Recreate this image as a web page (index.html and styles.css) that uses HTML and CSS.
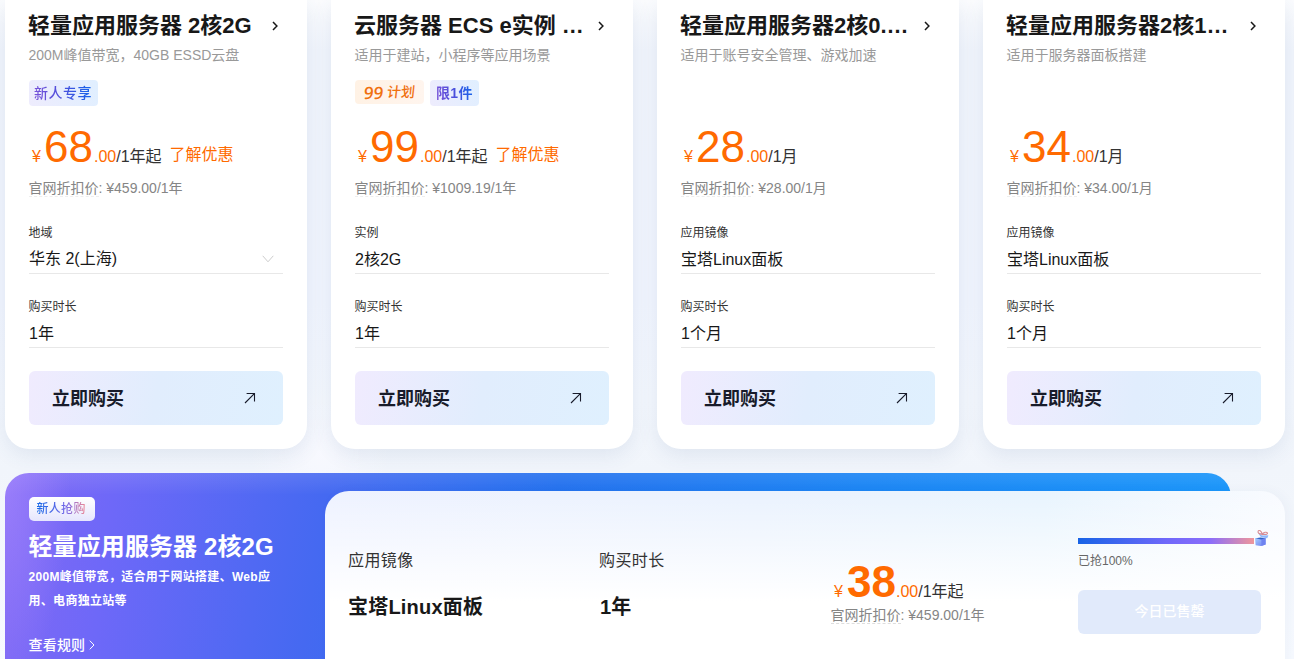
FILE: index.html
```html
<!DOCTYPE html>
<html lang="zh-CN">
<head>
<meta charset="utf-8">
<title>云服务器优惠</title>
<link rel="stylesheet" href="styles.css">
</head>
<body>
<svg class="sprite" width="0" height="0">
  <symbol id="chevron" viewBox="0 0 8 10"><path d="M2 1 5.9 5 2 9" fill="none" stroke="currentColor" stroke-width="1.5"/></symbol>
  <symbol id="arrow" viewBox="0 0 12 12"><path d="M1 11 10.6 1.4M2.6 1.5H10.5V9.4" fill="none" stroke="currentColor" stroke-width="1.1"/></symbol>
</svg>
<main class="page">
  <section class="cards">
    <article class="card">
      <h2 class="title"><span>轻量应用服务器 2核2G</span><svg class="chev"><use href="#chevron"/></svg></h2>
      <p class="desc">200M峰值带宽，40GB ESSD云盘</p>
      <div class="tags"><span class="tag"><b>新人专享</b></span></div>
      <div class="price"><i>¥</i><strong>68</strong><em>.00</em><span>/1年起</span><a>了解优惠</a></div>
      <p class="origin"><u>官网折扣价</u>: ¥459.00/1年</p>
      <div class="label">地域</div>
      <div class="value select">华东 2(上海)<svg class="down" viewBox="0 0 12 8"><path d="M.7 .8 6 6.8 11.3 .8" fill="none" stroke="#ccc"/></svg></div>
      <div class="label second">购买时长</div>
      <div class="value">1年</div>
      <div class="buy"><span>立即购买</span><svg class="arrow"><use href="#arrow"/></svg></div>
    </article>
    <article class="card">
      <h2 class="title"><span>云服务器 ECS e实例 …</span><svg class="chev"><use href="#chevron"/></svg></h2>
      <p class="desc">适用于建站，小程序等应用场景</p>
      <div class="tags"><span class="plan"><span class="plan-num">99</span><span>计划</span></span><span class="tag strong"><b>限1件</b></span></div>
      <div class="price"><i>¥</i><strong>99</strong><em>.00</em><span>/1年起</span><a>了解优惠</a></div>
      <p class="origin"><u>官网折扣价</u>: ¥1009.19/1年</p>
      <div class="label">实例</div>
      <div class="value">2核2G</div>
      <div class="label second">购买时长</div>
      <div class="value">1年</div>
      <div class="buy"><span>立即购买</span><svg class="arrow"><use href="#arrow"/></svg></div>
    </article>
    <article class="card">
      <h2 class="title"><span>轻量应用服务器2核0.…</span><svg class="chev"><use href="#chevron"/></svg></h2>
      <p class="desc">适用于账号安全管理、游戏加速</p>
      <div class="tags"></div>
      <div class="price"><i>¥</i><strong>28</strong><em>.00</em><span>/1月</span></div>
      <p class="origin"><u>官网折扣价</u>: ¥28.00/1月</p>
      <div class="label">应用镜像</div>
      <div class="value">宝塔Linux面板</div>
      <div class="label second">购买时长</div>
      <div class="value">1个月</div>
      <div class="buy"><span>立即购买</span><svg class="arrow"><use href="#arrow"/></svg></div>
    </article>
    <article class="card">
      <h2 class="title"><span>轻量应用服务器2核1…</span><svg class="chev"><use href="#chevron"/></svg></h2>
      <p class="desc">适用于服务器面板搭建</p>
      <div class="tags"></div>
      <div class="price"><i>¥</i><strong>34</strong><em>.00</em><span>/1月</span></div>
      <p class="origin"><u>官网折扣价</u>: ¥34.00/1月</p>
      <div class="label">应用镜像</div>
      <div class="value">宝塔Linux面板</div>
      <div class="label second">购买时长</div>
      <div class="value">1个月</div>
      <div class="buy"><span>立即购买</span><svg class="arrow"><use href="#arrow"/></svg></div>
    </article>
  </section>

  <section class="banner">
    <div class="intro">
      <span class="badge"><b>新人抢购</b></span>
      <h2>轻量应用服务器 2核2G</h2>
      <p>200M峰值带宽，适合用于网站搭建、Web应用、电商独立站等</p>
      <div class="rules">查看规则<svg viewBox="0 0 6 10"><path d="M.8 .7 5 5 .8 9.3" fill="none" stroke="#fff"/></svg></div>
    </div>
    <div class="panel">
      <div class="spec"><span>应用镜像</span><b>宝塔Linux面板</b></div>
      <div class="spec"><span>购买时长</span><b>1年</b></div>
      <div class="deal">
        <div class="price bold"><i>¥</i><strong>38</strong><em>.00</em><span>/1年起</span></div>
        <p class="origin"><u>官网折扣价</u>: ¥459.00/1年</p>
      </div>
      <div class="stock">
        <div class="bar">
          <svg class="gift" viewBox="0 0 16 18">
            <defs><linearGradient id="box" x1="0" y1="0" x2="1" y2="1"><stop offset="0" stop-color="#a9cfff"/><stop offset="1" stop-color="#6a7cf0"/></linearGradient></defs>
            <path d="M2 9 7.5 9.6 12.6 9V15.4L8 17 2.6 16.2Z" fill="url(#box)"/>
            <path d="M8.4 9.8 12.6 9V15.4L8.4 16.9Z" fill="#6f83f0"/>
            <path d="M2.6 9.2 7.5 8.4 12 9.2 8 10.6Z" fill="#2f62c8"/>
            <path d="M5.4 4.6 10.5 4.2 15.4 6.6 14.2 9.3 8 8.2Z" fill="#8fb8fb"/>
            <path d="M5.4 4.6 10.5 4.2 15.4 6.6 9.6 7Z" fill="#c2dafe"/>
            <path d="M9.3 5.1C6 5.4 4.4 3.6 5.2 2.1S8.4 1.8 9.3 5.1C10.4 3.2 13.8 2.6 14.4 4S12 5.8 9.3 5.1" fill="none" stroke="#d98c93" stroke-width="1.1"/>
          </svg>
        </div>
        <div class="sold">已抢100%</div>
        <div class="soldout">今日已售罄</div>
      </div>
    </div>
  </section>
</main>
</body>
</html>
```
FILE: styles.css
```css
* { box-sizing: border-box; }
body {
  margin: 0;
  font-family: "Liberation Sans", "Noto Sans CJK SC", sans-serif;
  color: #181818;
}
h2, p { margin: 0; }
i, em { font-style: normal; }
u { text-decoration: none; }
svg { display: block; flex: none; }
.sprite { position: absolute; }

.page {
  width: 1294px;
  height: 659px;
  overflow: hidden;
  padding-left: 5px;
  background:
    radial-gradient(circle at 320px 455px, rgba(248, 249, 255, .9), transparent 70px),
    linear-gradient(#fbfcfe 0, #f1f5fc 50px, #f1f5fe 300px, #f3f7fd 400px, #f1f5fb 470px, #f7faff 659px);
}

.cards {
  display: grid;
  grid-template-columns: repeat(4, 302px);
  gap: 24px;
}
.card {
  display: flex;
  flex-direction: column;
  height: 449px;
  padding: 12px 24px 24px;
  border-radius: 0 0 24px 24px;
  background: #fff;
  box-shadow: 0 6px 20px rgba(60, 85, 135, .1);
}
.title {
  display: flex;
  align-items: center;
  justify-content: space-between;
  height: 28px;
  margin-left: -1px;
  padding-right: 4px;
  font-size: 22px;
  line-height: 28px;
  white-space: nowrap;
}
.chev { width: 8px; height: 10px; }
.desc {
  margin: 5px 0 0 -.5px;
  font-size: 14px;
  line-height: 20px;
  color: #999;
}
.tags {
  display: flex;
  align-items: flex-start;
  gap: 6px;
  height: 26px;
  margin-top: 15px;
}
.tag {
  height: 26px;
  padding: 0 6px 0 5px;
  border-radius: 4px;
  background: linear-gradient(70deg, #eeecfd, #e0efff);
  font-size: 14px;
  letter-spacing: .5px;
  line-height: 26px;
}
.tag b {
  font-weight: 500;
  background: linear-gradient(80deg, #7a52d8, #4a4fdc 50%, #1366ec);
  -webkit-background-clip: text;
  background-clip: text;
  color: transparent;
}
.tag.strong { padding-left: 6px; letter-spacing: .3px; }
.tag.strong b { font-weight: 700; }
.plan {
  display: flex;
  gap: 4px;
  width: 69px;
  height: 24px;
  padding-left: 9px;
  border-radius: 4px;
  background: linear-gradient(90deg, #fff2e5, #fff5ee);
  color: #f0700f;
  font-size: 14px;
  font-weight: 500;
  line-height: 25px;
}
.plan span { transform: skewX(-6deg); }
.plan .plan-num { font-size: 17px; font-weight: 700; font-family: "Open Sans", sans-serif; font-weight: 600; }

.price {
  display: flex;
  align-items: baseline;
  height: 50px;
  margin-top: 16px;
  padding-left: 3px;
  font-size: 16px;
  line-height: 16px;
  color: #ff6a00;
  white-space: nowrap;
}
.price i { width: 12px; }
.price strong {
  width: 50px;
  font-size: 44px;
  font-weight: 400;
  line-height: 50px;
}
.price span { color: #333; }
.price a { margin-left: 8px; transform: translateY(-2px); }
.bold strong { padding-left: 1px; font-weight: 700; }
.origin {
  margin: 6px 0 0 -.5px;
  font-size: 14px;
  line-height: 20px;
  color: #858585;
  white-space: nowrap;
}
.origin u { border-bottom: 1px dashed #eee; }
.label {
  margin: 27px 0 0 -.5px;
  font-size: 12px;
  line-height: 16px;
  color: #333;
}
.label.second { margin-top: 25px; }
.value {
  display: flex;
  justify-content: space-between;
  height: 33px;
  padding-top: 7px;
  border-bottom: 1px solid #e8e8e8;
  font-size: 16px;
  line-height: 24px;
}
.value.select { padding-top: 6px; }
.down { width: 12px; height: 8px; margin: 8px 9px 0 0; }
.buy {
  display: flex;
  align-items: center;
  justify-content: space-between;
  height: 54px;
  margin-top: auto;
  padding: 0 27px 0 23px;
  border-radius: 6px;
  background: linear-gradient(100deg, #f0ebfe, #e1edfd 50%, #dff0fe);
  font-size: 18px;
  font-weight: 700;
  color: #181b2a;
}
.buy span { margin-bottom: 3px; }
.arrow { width: 12px; height: 12px; }

.banner {
  position: relative;
  display: flex;
  width: 1280px;
  height: 230px;
  margin-top: 24px;
}
.banner::before {
  content: "";
  position: absolute;
  inset: 0 54px 0 0;
  border-radius: 24px 24px 0 0;
  background:
    radial-gradient(ellipse 65px 220px at 0 0, rgba(170, 140, 255, .6), transparent),
    linear-gradient(rgba(255, 255, 255, .1), transparent 22px),
    linear-gradient(98deg, #8269f4 0, #6e68f8 110px, #5069f3 260px, #4569f1 320px, #206fee 550px, #1783f4 850px, #1694fa 1220px);
}
.intro {
  position: relative;
  width: 320px;
  padding: 24px 24px 24px 23.5px;
  color: #fff;
}
.badge {
  display: block;
  width: 66px;
  height: 24px;
  padding-left: 8px;
  border-radius: 5px;
  background: linear-gradient(#fff, #e6e6fd);
  font-size: 12px;
  letter-spacing: .3px;
  line-height: 24px;
}
.badge b {
  font-weight: 500;
  background: linear-gradient(90deg, #1769e6, #7567e8 60%, #f28b93);
  -webkit-background-clip: text;
  background-clip: text;
  color: transparent;
}
.intro h2 { margin-top: 10px; font-size: 24px; letter-spacing: .1px; line-height: 32px; white-space: nowrap; }
.intro p { width: 254px; margin-top: 2px; font-size: 12px; font-weight: 600; letter-spacing: .3px; line-height: 24px; }
.rules { display: flex; align-items: center; gap: 4px; margin-top: 22px; font-size: 14px; letter-spacing: .2px; line-height: 20px; font-weight: 500; }
.rules svg { width: 6px; height: 10px; }

.panel {
  position: relative;
  display: grid;
  grid-template-columns: 251px 232px 247px 183px;
  width: 960px;
  height: 212px;
  margin-top: 18px;
  padding-left: 23px;
  border-radius: 24px 24px 0 0;
  background:
    linear-gradient(rgba(255, 255, 255, 0), #fff 110px),
    linear-gradient(90deg, #eef2ff, #eaf2fe 45%, #e8f4fe 75%, #f9fbff);
  box-shadow: 4px 0 12px rgba(60, 85, 135, .04);
}
.spec { padding-top: 58px; }
.spec span, .spec b { display: block; }
.spec span { font-size: 16px; letter-spacing: .4px; line-height: 24px; color: #333; }
.spec b { margin-top: 20px; font-size: 20px; letter-spacing: .2px; line-height: 28px; }
.spec + .spec b { padding-left: 1px; }
.deal { padding-top: 66px; }
.deal .price { margin-top: 0; }
.deal .origin { margin-top: -2px; }
.deal .origin u { border-color: #ddd; }
.stock { padding-top: 47px; }
.bar {
  position: relative;
  width: 176px;
  height: 6px;
  background: linear-gradient(90deg, #1763e6, #6f68fa 50%, #8b6dfa 75%, #ef969a);
}
.gift { position: absolute; left: 175px; top: -9px; width: 16px; height: 18px; }
.sold { margin-top: 9px; font-size: 12px; line-height: 16px; color: #666; }
.soldout {
  height: 44px;
  margin-top: 21px;
  border-radius: 6px;
  background: #e1eafb;
  color: #fff;
  font-size: 14px;
  font-weight: 500;
  line-height: 42px;
  text-align: center;
}
```
